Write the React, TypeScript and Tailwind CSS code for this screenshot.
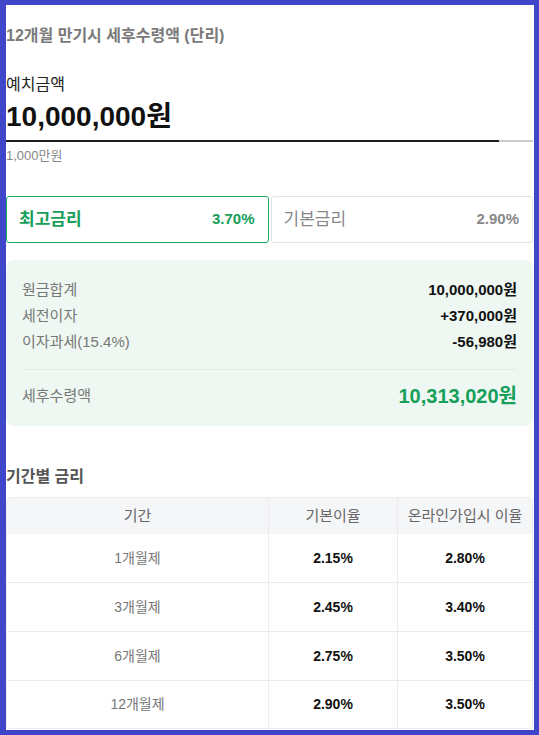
import React from "react";

const FONT = '"Liberation Sans", Arial, "Noto Sans CJK KR", sans-serif';

const summaryRows = [
  { label: "원금합계", value: "10,000,000원" },
  { label: "세전이자", value: "+370,000원" },
  { label: "이자과세(15.4%)", value: "-56,980원" },
];

const periodRates = [
  { period: "1개월제", base: "2.15%", online: "2.80%", rowClass: "h-[48px]" },
  { period: "3개월제", base: "2.45%", online: "3.40%", rowClass: "h-[49px] border-t border-[#ececee]" },
  { period: "6개월제", base: "2.75%", online: "3.50%", rowClass: "h-[49px] border-t border-[#ececee]" },
  { period: "12개월제", base: "2.90%", online: "3.50%", rowClass: "h-[48px] border-t border-[#ececee]" },
];

export default function App() {
  return (
    <div
      className="w-[539px] h-[735px] bg-white border-[5px] border-l-[6px] border-[#4046c9] overflow-hidden"
      style={{ fontFamily: FONT }}
    >
      <div className="flex flex-col pt-[21px] pr-px">
        <h1 className="text-[16px] leading-[20px] font-bold text-[#7a7a7a]">
          12개월 만기시 세후수령액 (단리)
        </h1>

        <div className="mt-[27px] text-[16px] leading-[24px] text-[#222]">예치금액</div>
        <div className="mt-[2px] text-[28px] leading-[36px] font-bold text-[#111]">10,000,000원</div>

        <div className="mt-[5px] flex h-[2px]">
          <div className="w-[93.5%] bg-[#1e1e22]" />
          <div className="flex-1 bg-[#cccccc]" />
        </div>
        <div className="mt-[5px] text-[13px] leading-[18px] text-[#888]">1,000만원</div>

        <div className="mt-[31px] grid grid-cols-2 gap-[2px]">
          <div className="h-[47px] flex items-center justify-between pl-[12px] pr-[13px] rounded-[3px] border border-[#1fa862]">
            <span className="text-[17px] font-semibold text-[#16a05a]">최고금리</span>
            <span className="text-[15px] font-bold text-[#16a05a]">3.70%</span>
          </div>
          <div className="h-[47px] flex items-center justify-between pl-[12px] pr-[13px] rounded-[3px] border border-[#e2e2e2]">
            <span className="text-[17px] text-[#888]">기본금리</span>
            <span className="text-[15px] font-bold text-[#888]">2.90%</span>
          </div>
        </div>

        <div className="mt-[17px] rounded-[8px] bg-[#eef7f2] px-[16px] pt-[17px] pb-[16px]">
          {summaryRows.map((r) => (
            <div key={r.label} className="flex items-center justify-between h-[26px]">
              <span className="text-[15px] text-[#777]">{r.label}</span>
              <span className="text-[15px] font-bold text-[#111]">{r.value}</span>
            </div>
          ))}
          <div className="mt-[14px] h-px bg-[#e0ebe4]" />
          <div className="mt-[12px] flex items-center justify-between h-[28px]">
            <span className="text-[15px] text-[#777]">세후수령액</span>
            <span className="text-[20px] font-bold text-[#16a05a]">10,313,020원</span>
          </div>
        </div>

        <h2 className="mt-[41px] text-[16px] leading-[20px] font-bold text-[#555]">기간별 금리</h2>

        <div className="mt-[10px] rounded-[4px] border border-[#ececee] overflow-hidden">
          <div className="grid grid-cols-[262px_129px_1fr] bg-[#f5f6f8] h-[36px] text-[15px] text-[#666]">
            <div className="flex items-center justify-center border-r border-[#ececee]">기간</div>
            <div className="flex items-center justify-center border-r border-[#ececee]">기본이율</div>
            <div className="flex items-center justify-center">온라인가입시 이율</div>
          </div>
          {periodRates.map((r) => (
            <div key={r.period} className={"grid grid-cols-[262px_129px_1fr] text-[14px] " + r.rowClass}>
              <div className="flex items-center justify-center border-r border-[#ececee] text-[#777]">
                {r.period}
              </div>
              <div className="flex items-center justify-center border-r border-[#ececee] font-bold text-[#111]">
                {r.base}
              </div>
              <div className="flex items-center justify-center font-bold text-[#111]">{r.online}</div>
            </div>
          ))}
        </div>
      </div>
    </div>
  );
}
